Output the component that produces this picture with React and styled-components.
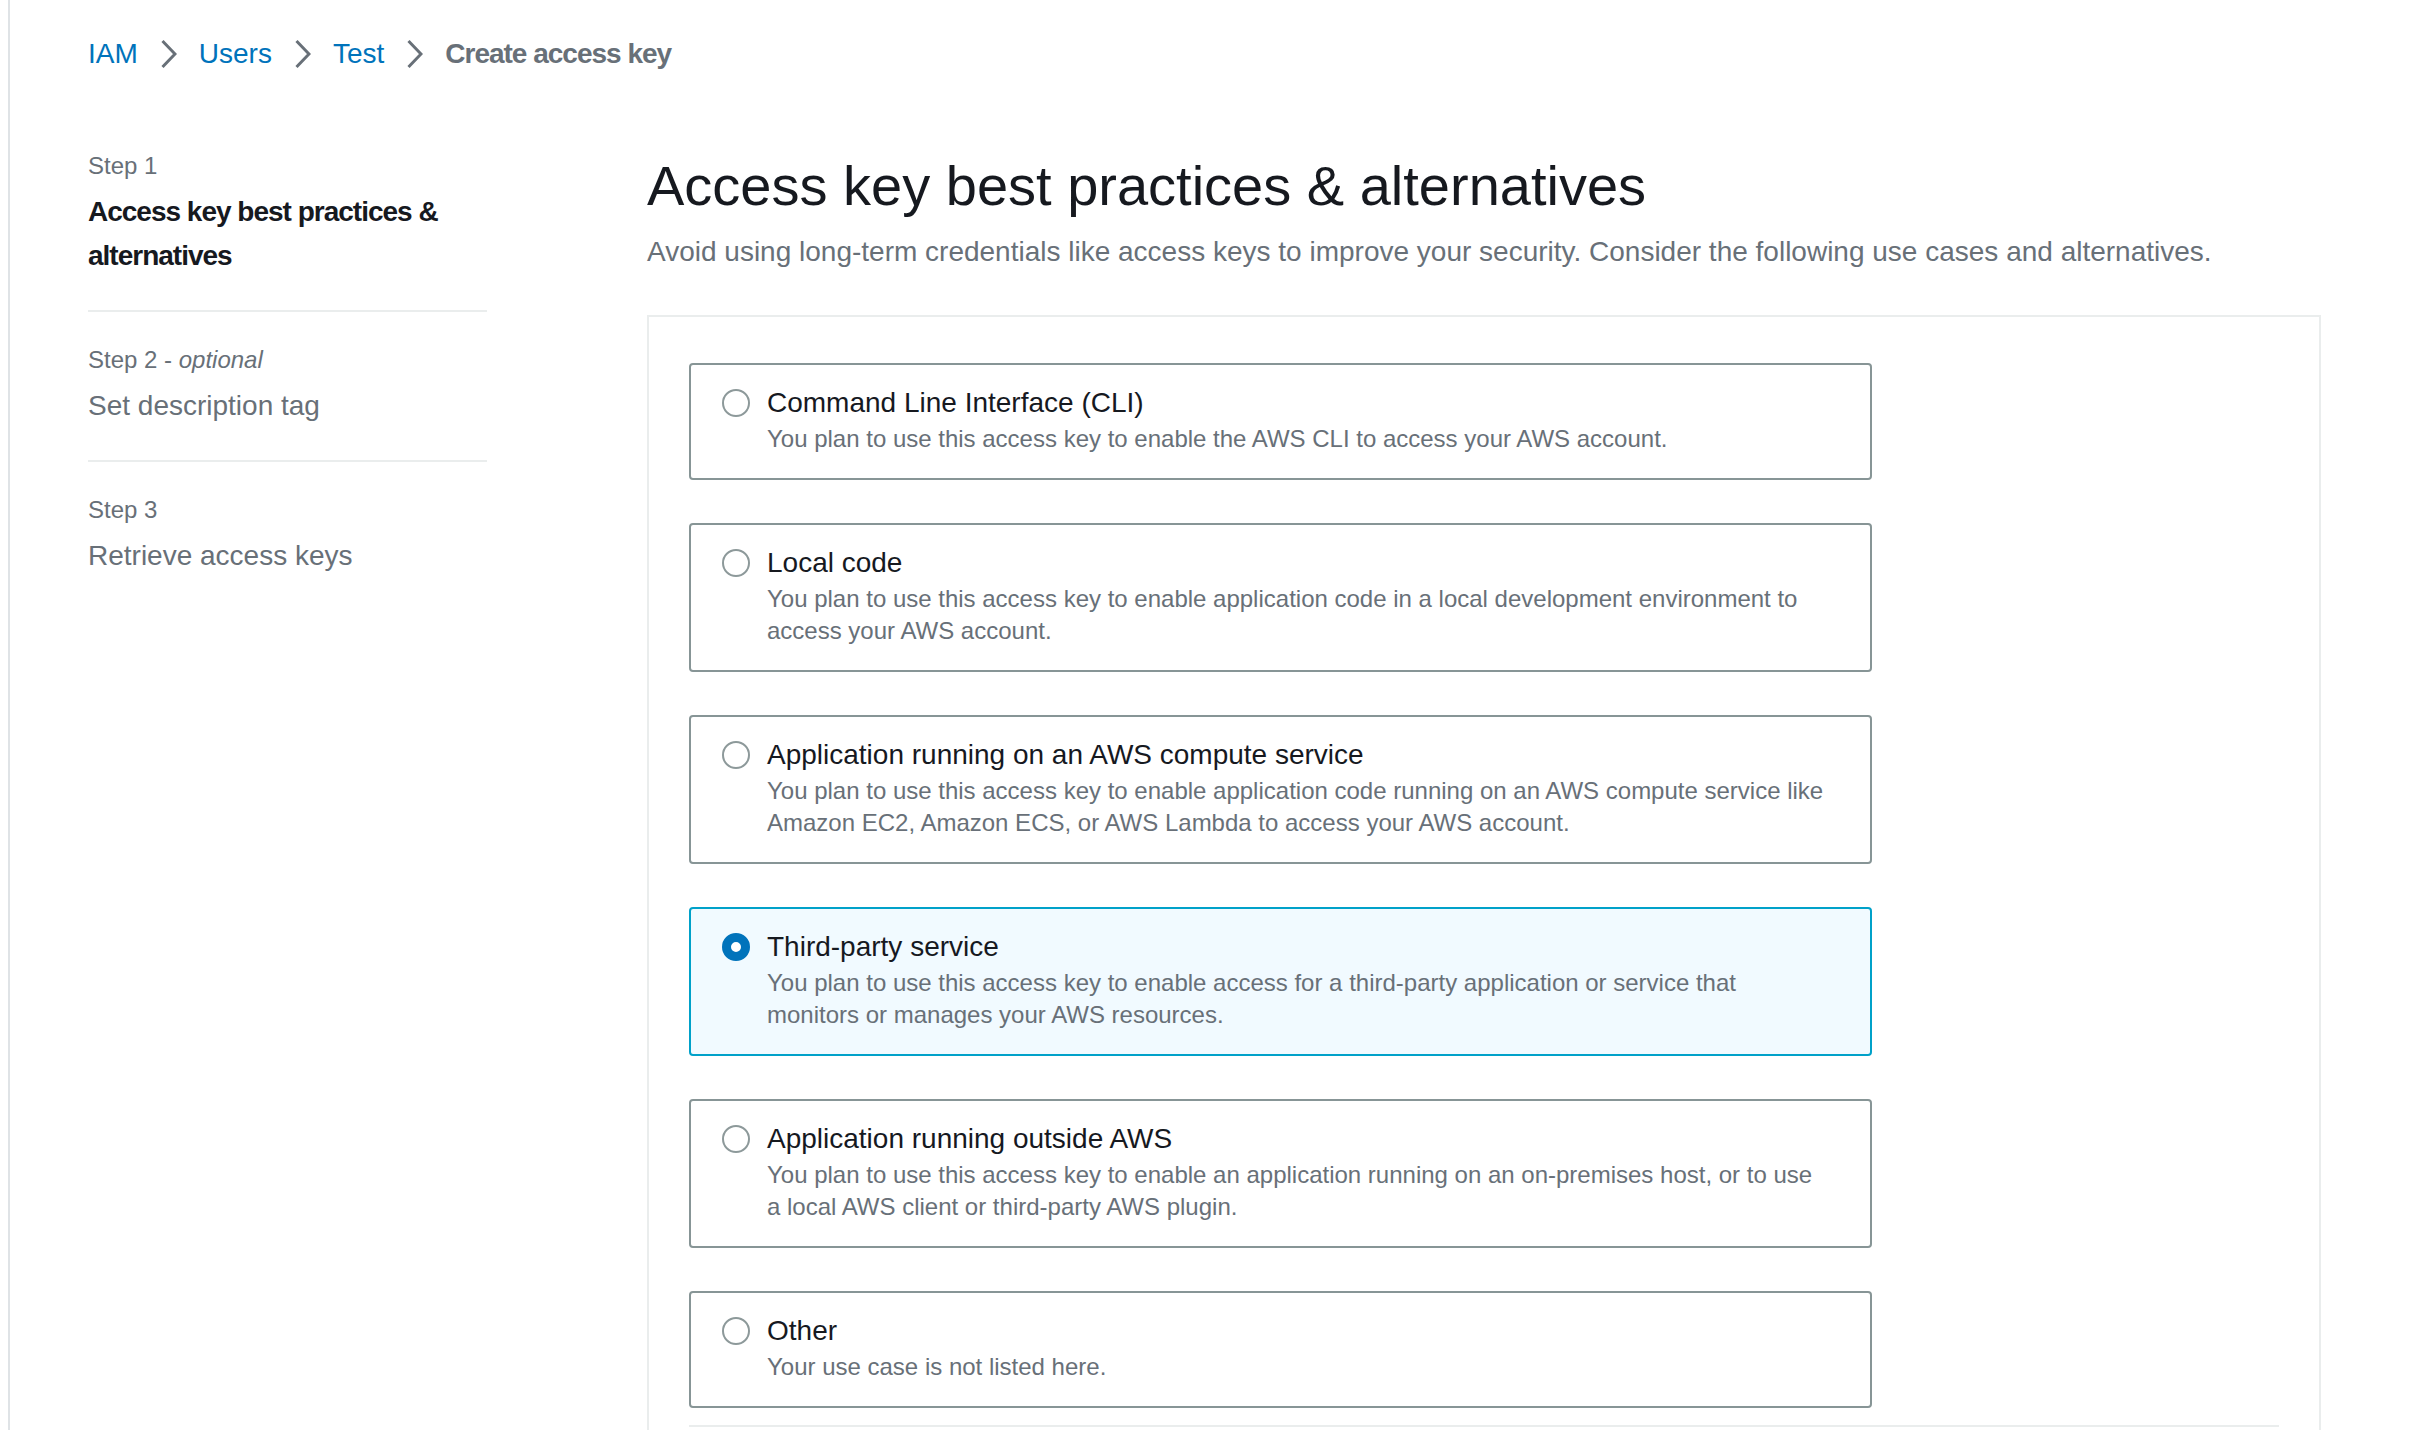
import React from 'react';
import styled, { createGlobalStyle } from 'styled-components';

const GlobalStyle = createGlobalStyle`
    html, body {
        margin: 0;
        padding: 0;
        background: #fff;
        overflow: hidden;
    }
    body {
        font-family: "Liberation Sans", Arial, sans-serif;
        color: #16191f;
    }
`;

const Page = styled.div`
    display: flex;
    min-height: 100vh;
`;

const Rail = styled.div`
    width: 8px;
    flex-shrink: 0;
    border-right: 2px solid #dfe3e6;
`;

const Content = styled.main`
    flex: 1;
    padding: 32px 89px 0 78px;
`;

const Breadcrumbs = styled.nav`
    display: flex;
    align-items: center;
    gap: 22px;
    font-size: 28px;
    line-height: 44px;
`;

const CrumbLink = styled.a`
    color: #0073bb;
    text-decoration: none;
`;

const CrumbCurrent = styled.span`
    color: #687078;
    font-weight: 700;
    letter-spacing: -1px;
`;

const Chevron = styled.svg`
    width: 17px;
    height: 30px;
    flex-shrink: 0;
`;

const Layout = styled.div`
    display: grid;
    grid-template-columns: 399px 1fr;
    column-gap: 160px;
    margin-top: 74px;
`;

const StepList = styled.ol`
    list-style: none;
    margin: 0;
    padding: 0;
`;

const StepItem = styled.li`
    padding-bottom: 32px;
    border-bottom: 2px solid #eaeded;
    & + & {
        padding-top: 32px;
    }
    &:last-child {
        border-bottom: none;
    }
`;

const StepLabel = styled.div`
    font-size: 24px;
    line-height: 32px;
    color: #687078;
    em {
        font-style: italic;
    }
`;

const StepTitle = styled.div`
    margin-top: 8px;
    font-size: 28px;
    line-height: 44px;
    color: ${p => (p.$active ? '#16191f' : '#687078')};
    font-weight: ${p => (p.$active ? 700 : 400)};
    letter-spacing: ${p => (p.$active ? '-1px' : '0')};
`;

const Main = styled.section`
    min-width: 0;
`;

const Heading = styled.h1`
    margin: 0;
    font-size: 56px;
    line-height: 72px;
    font-weight: 400;
    color: #16191f;
`;

const Subtitle = styled.p`
    margin: 8px 0 0;
    font-size: 28px;
    line-height: 44px;
    color: #687078;
`;

const Panel = styled.div`
    margin-top: 41px;
    border: 2px solid #eaeded;
    border-bottom: none;
    padding: 46px 40px 60px;
`;

const TileList = styled.div`
    display: flex;
    flex-direction: column;
    gap: 43px;
    width: 1183px;
`;

const Tile = styled.label`
    display: flex;
    align-items: flex-start;
    gap: 17px;
    padding: 18px 31px 23px;
    border: 2px solid ${p => (p.$selected ? '#00a1c9' : '#879596')};
    border-radius: 4px;
    background: ${p => (p.$selected ? '#f1faff' : '#fff')};
    cursor: pointer;
`;

const Radio = styled.span`
    box-sizing: border-box;
    width: 28px;
    height: 28px;
    margin-top: 6px;
    flex-shrink: 0;
    border-radius: 50%;
    background: #fff;
    border: ${p => (p.$checked ? '9px solid #0073bb' : '2px solid #8d999a')};
`;

const TileBody = styled.div`
    display: flex;
    flex-direction: column;
`;

const TileTitle = styled.span`
    font-size: 28px;
    line-height: 40px;
    color: #16191f;
`;

const TileDesc = styled.span`
    font-size: 24px;
    line-height: 32px;
    color: #687078;
    white-space: nowrap;
`;

const Divider = styled.hr`
    margin: 17px 0 0;
    border: none;
    height: 2px;
    background: #eaeded;
`;

const crumbs = ['IAM', 'Users', 'Test'];

const steps = [
    { label: 'Step 1', title: ['Access key best practices &', 'alternatives'], active: true },
    { label: 'Step 2', optional: true, title: ['Set description tag'] },
    { label: 'Step 3', title: ['Retrieve access keys'] },
];

const options = [
    {
        title: 'Command Line Interface (CLI)',
        desc: ['You plan to use this access key to enable the AWS CLI to access your AWS account.'],
    },
    {
        title: 'Local code',
        desc: [
            'You plan to use this access key to enable application code in a local development environment to',
            'access your AWS account.',
        ],
    },
    {
        title: 'Application running on an AWS compute service',
        desc: [
            'You plan to use this access key to enable application code running on an AWS compute service like',
            'Amazon EC2, Amazon ECS, or AWS Lambda to access your AWS account.',
        ],
    },
    {
        title: 'Third-party service',
        desc: [
            'You plan to use this access key to enable access for a third-party application or service that',
            'monitors or manages your AWS resources.',
        ],
        selected: true,
    },
    {
        title: 'Application running outside AWS',
        desc: [
            'You plan to use this access key to enable an application running on an on-premises host, or to use',
            'a local AWS client or third-party AWS plugin.',
        ],
    },
    {
        title: 'Other',
        desc: ['Your use case is not listed here.'],
    },
];

function ChevronIcon() {
    return (
        <Chevron viewBox="0 0 17 30" fill="none">
            <polyline points="2.5,2 15,15 2.5,28" stroke="#687078" strokeWidth="3" strokeLinejoin="miter" />
        </Chevron>
    );
}

export default function App() {
    return (
        <>
            <GlobalStyle />
            <Page>
                <Rail />
                <Content>
                    <Breadcrumbs>
                        {crumbs.map(c => (
                            <React.Fragment key={c}>
                                <CrumbLink href="#">{c}</CrumbLink>
                                <ChevronIcon />
                            </React.Fragment>
                        ))}
                        <CrumbCurrent>Create access key</CrumbCurrent>
                    </Breadcrumbs>

                    <Layout>
                        <StepList>
                            {steps.map(s => (
                                <StepItem key={s.label}>
                                    <StepLabel>
                                        {s.label}
                                        {s.optional && <> - <em>optional</em></>}
                                    </StepLabel>
                                    <StepTitle $active={s.active}>
                                        {s.title.map((line, i) => (
                                            <React.Fragment key={i}>
                                                {i > 0 && <br />}
                                                {line}
                                            </React.Fragment>
                                        ))}
                                    </StepTitle>
                                </StepItem>
                            ))}
                        </StepList>

                        <Main>
                            <Heading>Access key best practices &amp; alternatives</Heading>
                            <Subtitle>
                                Avoid using long-term credentials like access keys to improve your security. Consider the following use cases and alternatives.
                            </Subtitle>
                            <Panel>
                                <TileList>
                                    {options.map(o => (
                                        <Tile key={o.title} $selected={o.selected}>
                                            <Radio $checked={o.selected} />
                                            <TileBody>
                                                <TileTitle>{o.title}</TileTitle>
                                                {o.desc.map((line, i) => (
                                                    <TileDesc key={i}>{line}</TileDesc>
                                                ))}
                                            </TileBody>
                                        </Tile>
                                    ))}
                                </TileList>
                                <Divider />
                            </Panel>
                        </Main>
                    </Layout>
                </Content>
            </Page>
        </>
    );
}
